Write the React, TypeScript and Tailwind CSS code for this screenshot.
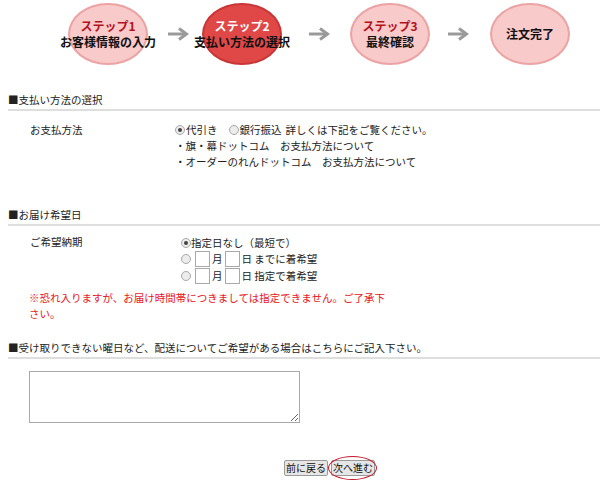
const font = '[font-family:"Noto_Sans_CJK_JP","Noto_Sans",sans-serif]';

function Arrow() {
  return (
    <svg width="22" height="14" viewBox="0 0 22 14" className="shrink-0">
      <path d="M1 7 H19" stroke="#9a9a9a" strokeWidth="3" fill="none" />
      <path d="M12 1.5 L19.5 7 L12 12.5" stroke="#9a9a9a" strokeWidth="3" fill="none" strokeLinejoin="miter" />
    </svg>
  );
}

function Step({ label, title, active }: { label?: string; title: string; active?: boolean }) {
  return (
    <div
      className={
        'w-[80px] h-[62px] shrink-0 rounded-[50%] border-2 flex flex-col items-center justify-center font-bold text-[12px] whitespace-nowrap ' +
        (active ? 'bg-[#e04848] border-[#c93636]' : 'bg-[#f9caca] border-[#eba3a3]')
      }
    >
      {label && (
        <span className={'block h-[16px] leading-[16px] ' + (active ? 'text-white' : 'text-[#b3121c]')}>{label}</span>
      )}
      <span className="block h-[16px] leading-[16px] text-[#111]">{title}</span>
    </div>
  );
}

function Radio({ checked }: { checked?: boolean }) {
  return (
    <span className="w-[10px] h-[10px] shrink-0 rounded-full border border-[#a8a8a8] bg-[#ececec] flex items-center justify-center">
      {checked && <span className="w-[4px] h-[4px] rounded-full bg-[#444]" />}
    </span>
  );
}

function Box() {
  return <span className="block w-[15px] h-[16px] shrink-0 border border-[#a9a9a9] bg-white" />;
}

function Heading({ children }: { children: React.ReactNode }) {
  return (
    <div className="pb-[1px] border-b-2 border-[#dedede] leading-[16px] text-[#222]">{children}</div>
  );
}

export default function App() {
  return (
    <div className={`w-[600px] h-[500px] bg-white overflow-hidden text-[10.5px] text-[#222] ${font}`}>
      {/* steps */}
      <div className="flex items-center pt-[3px] pl-[68px]">
        <Step label="ステップ1" title="お客様情報の入力" />
        <div className="ml-[19px] mr-[13px]"><Arrow /></div>
        <Step label="ステップ2" title="支払い方法の選択" active />
        <div className="ml-[26px] mr-[20px]"><Arrow /></div>
        <Step label="ステップ3" title="最終確認" />
        <div className="ml-[17px] mr-[21px]"><Arrow /></div>
        <Step title="注文完了" />
      </div>

      <div className="pl-[8px]">
        <div className="mt-[27px]">
          <Heading>■支払い方法の選択</Heading>
        </div>

        <div className="flex mt-[11px] pl-[22px] leading-[16px]">
          <div className="w-[145px] shrink-0">お支払方法</div>
          <div className="flex flex-col">
            <div className="flex items-center h-[16px]">
              <Radio checked />
              <span className="ml-[1px]">代引き</span>
              <span className="ml-[11px]"><Radio /></span>
              <span className="ml-[1px]">銀行振込</span>
              <span className="ml-[4px]">詳しくは下記をご覧ください。</span>
            </div>
            <div>・旗・幕ドットコム　お支払方法について</div>
            <div>・オーダーのれんドットコム　お支払方法について</div>
          </div>
        </div>

        <div className="mt-[37px]">
          <Heading>■お届け希望日</Heading>
        </div>

        <div className="flex mt-[8px] pl-[22px] leading-[16px]">
          <div className="w-[151px] shrink-0">ご希望納期</div>
          <div className="flex flex-col">
            <div className="flex items-center h-[17px]">
              <Radio checked />
              <span>指定日なし（最短で）</span>
            </div>
            <div className="flex items-center h-[16px]">
              <Radio />
              <span className="ml-[4px]"><Box /></span>
              <span className="ml-[2px]">月</span>
              <span className="ml-[2px]"><Box /></span>
              <span className="ml-[2px]">日 までに着希望</span>
            </div>
            <div className="flex items-center h-[17px]">
              <Radio />
              <span className="ml-[4px]"><Box /></span>
              <span className="ml-[2px]">月</span>
              <span className="ml-[2px]"><Box /></span>
              <span className="ml-[2px]">日 指定で着希望</span>
            </div>
          </div>
        </div>

        <p className="mt-[6px] ml-[21px] w-[360px] leading-[16px] text-[#e8141e]">
          ※恐れ入りますが、お届け時間帯につきましては指定できません。ご了承下さい。
        </p>

        <div className="mt-[18px]">
          <Heading>■受け取りできない曜日など、配送についてご希望がある場合はこちらにご記入下さい。</Heading>
        </div>

        <textarea className="block mt-[12px] ml-[21px] w-[271px] h-[52px] border border-[#a9a9a9] outline-none" />

        <div className="flex mt-[37px] ml-[276px]">
          <button className="h-[16px] px-[1px] border border-[#9a9a9a] rounded-[2px] bg-[#e6e6e6] leading-[14px] text-[10px] text-[#111]">
            前に戻る
          </button>
          <div className="relative ml-[3px]">
            <button className="h-[16px] px-[1px] border border-[#9a9a9a] rounded-[2px] bg-[#e6e6e6] leading-[14px] text-[10px] text-[#111]">
              次へ進む
            </button>
            <span className="absolute left-[-3px] top-[-4px] w-[49px] h-[24px] rounded-[50%] border border-[#c4182a] pointer-events-none" />
          </div>
        </div>
      </div>
    </div>
  );
}
